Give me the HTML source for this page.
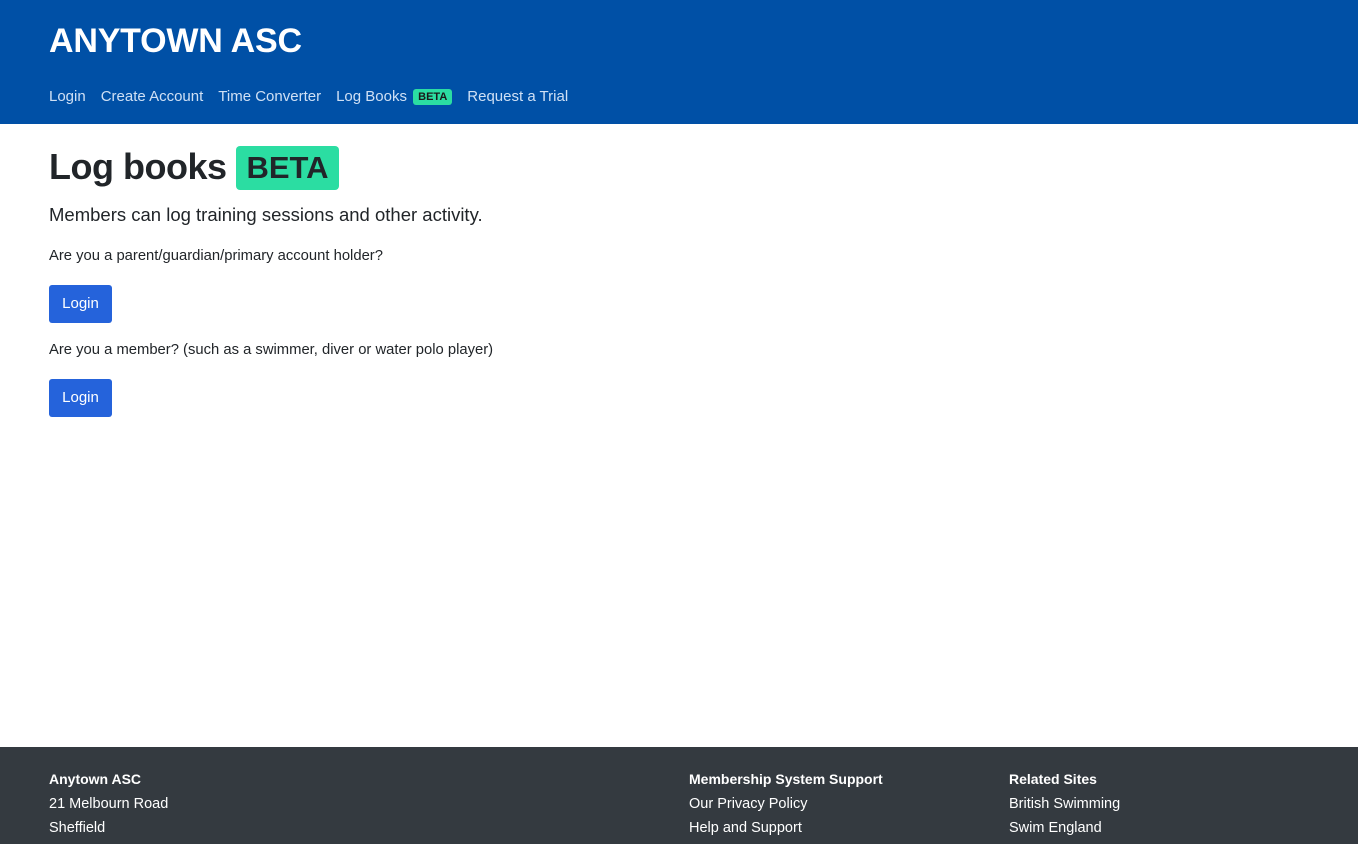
<!DOCTYPE html>
<html><head><meta charset="utf-8"><style>
*{box-sizing:border-box}
body{margin:0;font-family:"Liberation Sans",sans-serif;color:#212529;width:1358px;height:844px;overflow:hidden;position:relative}
.hdr{background:#0050a6;height:124px;position:relative}
.brand{position:absolute;left:49px;top:22px;color:#fff;font-weight:bold;font-size:34px;letter-spacing:-0.2px}
.nav{position:absolute;left:49px;top:88px;font-size:15px;color:#cfe0f5}
.nav span{margin-right:15px}
.sb{display:inline-block;background:#2bdda2;color:#1a1a1a;font-weight:bold;font-size:11px;padding:2px 5px;border-radius:3px;vertical-align:1px;margin-left:2px}
h1{position:absolute;left:49px;top:146px;margin:0;font-size:36px;font-weight:bold;letter-spacing:-0.5px}
.bb{position:absolute;left:236px;top:146px;width:103px;height:44px;background:#2bdda2;border-radius:4px;font-weight:bold;font-size:31px;text-align:center;line-height:44px}
.lead{position:absolute;left:49px;top:204px;font-size:18.5px}
.p{position:absolute;left:49px;font-size:14.8px}
.btn{position:absolute;left:49px;width:63px;height:38px;background:#2563db;color:#fff;border-radius:3px;font-size:15px;text-align:center;line-height:38px}
.ft{position:absolute;left:0;top:747px;width:1358px;height:97px;background:#343a40;color:#fff;font-size:14.5px}
.col{position:absolute;top:20px;line-height:24px}
.col b{font-size:14px}
</style></head><body>
<div class="hdr"><div class="brand">ANYTOWN ASC</div>
<div class="nav"><span>Login</span><span>Create Account</span><span>Time Converter</span><span>Log Books <i class="sb" style="font-style:normal">BETA</i></span><span>Request a Trial</span></div></div>
<h1>Log books</h1><div class="bb">BETA</div>
<div class="lead">Members can log training sessions and other activity.</div>
<div class="p" style="top:248px">Are you a parent/guardian/primary account holder?</div>
<div class="btn" style="top:285px">Login</div>
<div class="p" style="top:342px">Are you a member? (such as a swimmer, diver or water polo player)</div>
<div class="btn" style="top:379px">Login</div>
<div class="ft">
<div class="col" style="left:49px"><b>Anytown ASC</b><br>21 Melbourn Road<br>Sheffield<br>S10 1NR</div>
<div class="col" style="left:689px"><b>Membership System Support</b><br>Our Privacy Policy<br>Help and Support<br>What's new?</div>
<div class="col" style="left:1009px"><b>Related Sites</b><br>British Swimming<br>Swim England<br>Swim England North East Region</div>
</div>
</body></html>
